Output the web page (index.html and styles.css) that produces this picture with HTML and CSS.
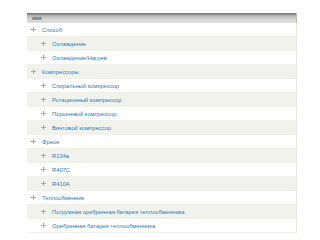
FILE: index.html
```html
<!DOCTYPE html>
<html>
<head>
<meta charset="utf-8">
<link rel="stylesheet" href="styles.css">
</head>
<body>
<div class="table">
  <div class="head">имя</div>
  <div class="row odd l0"><span class="plus"></span><a>Способ</a></div>
  <div class="row even l1"><span class="plus"></span><a>Охлаждение</a></div>
  <div class="row odd l1"><span class="plus"></span><a>Охлаждение/Нагрев</a></div>
  <div class="row even l0"><span class="plus"></span><a>Компрессоры</a></div>
  <div class="row odd l1"><span class="plus"></span><a>Спиральный компрессор</a></div>
  <div class="row even l1"><span class="plus"></span><a>Ротационный компрессор</a></div>
  <div class="row odd l1"><span class="plus"></span><a>Поршневой компрессор</a></div>
  <div class="row even l1"><span class="plus"></span><a>Винтовой компрессор</a></div>
  <div class="row odd l0"><span class="plus"></span><a>Фреон</a></div>
  <div class="row even l1"><span class="plus"></span><a>R134a</a></div>
  <div class="row odd l1"><span class="plus"></span><a>R407C</a></div>
  <div class="row even l1"><span class="plus"></span><a>R410A</a></div>
  <div class="row odd l0"><span class="plus"></span><a>Теплообменник</a></div>
  <div class="row even l1"><span class="plus"></span><a>Погружная оребренная батарея теплообменника</a></div>
  <div class="row odd l1"><span class="plus"></span><a>Оребренная батарея теплообменника</a></div>
</div>
</body>
</html>
```
FILE: styles.css
```css
html, body { margin: 0; padding: 0; background: #fff; }
body { font-family: "Liberation Sans", Arial, sans-serif; font-size: 5.8px; }
.table {
  margin: 13px 0 0 27px;
  width: 270px;
  display: flex;
  flex-direction: column;
}
.head {
  height: 10px;
  box-sizing: border-box;
  padding: 2px 0 0 5px;
  color: #666;
  font-weight: bold;
  font-size: 5px;
  background: linear-gradient(#6a6a6a 0, #888 1px, #b8b8b8 3px, #d4d4d4 6px, #dcdcdc 100%);
  border-right: 1px solid #bebfb9;
}
.row {
  height: 14px;
  box-sizing: border-box;
  display: flex;
  align-items: center;
  border-right: 1px solid #e6e7e1;
  border-bottom: 1px solid #f0f0ec;
}
.odd { background: #fff; }
.even { background: #f1f2ec; }
.l0 { padding-left: 4px; }
.l1 { padding-left: 14px; }
.plus {
  width: 5px; height: 5px;
  margin-right: 6px;
  flex: none;
  background:
    linear-gradient(#aaa, #aaa) center / 5px 1px no-repeat,
    linear-gradient(#aaa, #aaa) center / 1px 5px no-repeat;
}
a { color: #2a7cc2; text-decoration: none; }
```
